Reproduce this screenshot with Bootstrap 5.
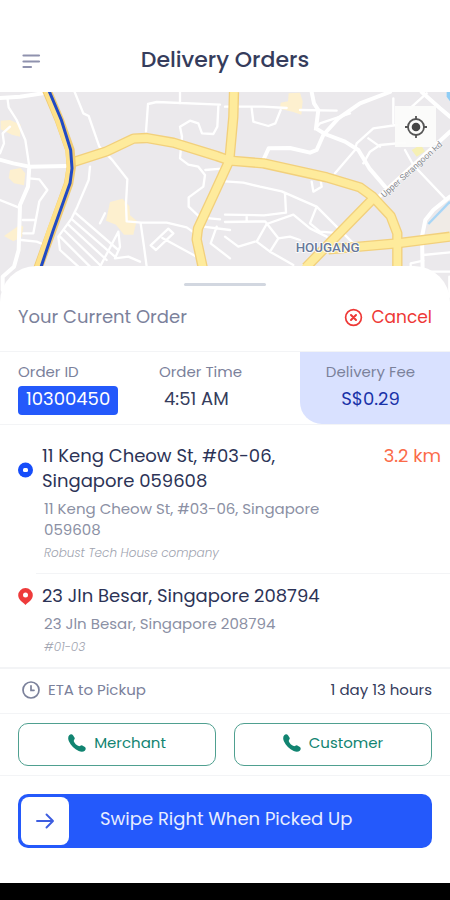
<!DOCTYPE html>
<html lang="en">
<head>
<meta charset="utf-8">
<meta name="viewport" content="width=device-width, initial-scale=1">
<title>Delivery Orders</title>
<link rel="stylesheet" href="https://cdn.jsdelivr.net/npm/bootstrap@5.3.0/dist/css/bootstrap.min.css">
<style>
  :root { --ink: #353c5c; --muted: #7b819b; --blue: #2459fb; --green: #118471; --line: #f3f4f6; }
  body { font-family: Poppins, Inter, "Open Sans", sans-serif; color: var(--ink); background: #000; }
  .screen { background: #fff; padding-bottom: 35px; }
  .topbar { padding: 41px 18px 13px; }
  .topbar h1 { font-size: 22px; line-height: 38px; font-weight: 500; }
  .icon-btn { background: none; border: 0; padding: 0; display: flex; }
  .side-slot { width: 26px; }
  .map-area { height: 213px; }
  .locate { top: 14px; right: 14px; width: 41px; height: 41px; background: rgba(252,252,251,.92); }
  .sheet { margin-top: -39px; background: #fff; border-radius: 36px 36px 0 0; }
  .handle-row { padding-top: 17px; }
  .handle { width: 82px; height: 3px; background: #d2d7e0; }
  .line-b { border-bottom: 1px solid var(--line); }
  .line-thick { border-bottom: 2px solid var(--line); }
  .order-head { padding: 18px 18px 21px; font-size: 17px; line-height: 26px; }
  .order-head h2 { font-size: 18px; line-height: 26px; font-weight: 400; }
  .soft { color: var(--muted); }
  .cancel { color: #ee3836; }
  .info dt { font-size: 15px; font-weight: 400; line-height: 21px; color: var(--muted); }
  .info dd { font-size: 18px; line-height: 26px; }
  .info-cell { padding: 9px 18px 9px 9px; }
  .info-cell:first-child { padding-left: 18px; padding-right: 9px; }
  .order-no { background: var(--blue); color: #fff; border-radius: 4px; padding: 0 8px 3px; line-height: 26px; }
  .time { padding-left: 5px; }
  .fee { background: #d9e1ff; border-bottom-left-radius: 22px; }
  .fee dd { color: #1932a8; }
  .stop-row { padding: 18px 9px 10px 18px; }
  .stop-row.drop { padding-top: 0; padding-bottom: 10px; }
  .pin { width: 15px; flex: none; margin-right: 9px; }
  .stop-title { font-size: 18px; line-height: 25px; font-weight: 400; color: #2c3356; }
  .stop-title.wraps { max-width: 260px; }
  .stop-sub { font-size: 15px; line-height: 21px; color: #8b90a4; padding: 5px 0 0 2px; max-width: 300px; }
  .stop-note { font-size: 12px; line-height: 20px; font-style: italic; font-weight: 300; color: #a0a4b0; padding: 3px 0 0 2px; }
  .km { color: #fb6b49; font-size: 18px; line-height: 25px; }
  .divider { height: 1px; background: var(--line); margin: 0 0 9px 36px; }
  .eta { padding: 9px 18px 11px 22px; font-size: 15px; line-height: 24px; }
  .calls { padding: 9px 18px; }
  .calls .row { --bs-gutter-x: 18px; }
  .call-btn { border: 1px solid #4fa090; border-radius: 10px; color: var(--green); background: #fff; font-size: 15px; line-height: 24px; padding: 7px 8px 10px; }
  .call-btn:hover { background: #effaf7; color: var(--green); }
  .swipe-wrap { padding: 18px 18px 0; }
  .swipe { background: var(--blue); border: 0; border-radius: 10px; padding: 3px; color: #e8edff; font-size: 18px; }
  .knob { width: 48px; height: 48px; background: #fff; border-radius: 8px; flex: none; }
  .swipe-text { margin-left: 31px; line-height: 24px; padding-bottom: 4px; }
</style>
</head>
<body>
<main class="screen">
  <header class="topbar d-flex align-items-center justify-content-between">
    <button class="icon-btn side-slot" type="button" aria-label="Menu">
      <svg width="26" height="20" viewBox="0 0 26 20" fill="none" stroke="#8f92ae" stroke-width="2.200" stroke-linecap="round"><path d="M5.500 5.500H21M5.500 11.500H21M5.500 17H13"/></svg>
    </button>
    <h1 class="m-0">Delivery Orders</h1>
    <span class="side-slot"></span>
  </header>

  <section class="map-area position-relative overflow-hidden" aria-label="Map">
    <svg class="d-block w-100 h-100" viewBox="0 6 1350 639" preserveAspectRatio="xMidYMid slice">
      <rect y="6" width="1350" height="639" fill="#ebe9ec"/>
      <g fill="#fdf0cf">
        <path d="M2 92L30 90 62 104 60 140 36 134 2 118ZM30 240L62 234 76 250 72 286 42 280 26 264ZM12 438L60 404 70 410 66 440 40 454ZM330 336L368 326 388 348 390 376 410 392 400 434 372 434 348 404 318 392Z"/>
        <path d="M866 10L900 8 908 34 904 74 880 66 840 56 842 38 864 34Z"/>
        <path d="M1235 180L1262 164 1275 184 1250 200Z" fill="#f6f0b4"/>
        <path d="M1290 400L1350 345V425L1275 435Z" fill="#f0ebe6"/>
      </g>
      <path d="M1340 6H1350V34L1340 20Z" fill="#8fcdf5"/>
      <path d="M1285 402L1350 335" stroke="#a9d6f5" stroke-width="7" fill="none"/>
      <g fill="none" stroke="#fff" stroke-linejoin="round" stroke-linecap="round">
        <g stroke-width="12">
          <path d="M-5 24L60 20 128 10M-5 208L40 220 88 230 200 228M88 230L84 290 60 345 56 480 42 530 8 560V600"/>
          <path d="M790 210L806 175 870 174 930 188 950 180 970 135 1015 85 1080 40 1170 6M935 6L942 40 955 60 948 115 975 132 1035 155 1075 180 1108 235 1155 290"/>
          <path d="M1135 322L1350 125M1350 320L1300 360 1276 390 1266 440 1268 545M1265 6L1320 55 1350 80"/>
        </g>
        <g stroke-width="7">
          <path d="M22 22L26 52 50 90 76 150 88 230M0 190L12 160 8 130 30 110M0 330L55 352M88 265L118 268 142 300 118 334 100 430H70M68 390H105M64 450L110 455 135 465"/>
          <path d="M224 6L250 70 266 78 298 170 335 208 382 268 378 340 380 394 424 398 500 398 560 412 585 430M270 230L266 270 232 350 215 385 175 440 180 480 235 530"/>
          <path d="M438 125L444 42 470 36 660 44M540 6V40M655 50L652 110 640 132 606 130 595 100 570 92 540 110 546 140 540 205 565 224 595 230 615 255 610 290 566 322 566 350 600 382 660 388M616 240L665 236"/>
          <path d="M422 400L432 470 440 530M452 466L505 416 520 430 468 480ZM487 444L590 500M355 425L300 530M355 425L360 470 345 505 385 500 420 515M650 410L632 460 690 505M610 410L690 420"/>
          <path d="M228 370L355 480M216 388L345 500M205 404L320 510M192 420L300 525M180 440L270 530M300 400L315 370"/>
          <path d="M675 50H790L860 54M755 55L760 95 805 108 826 100 842 60M900 60L1010 62M945 118L960 100 1050 70"/>
          <path d="M675 274L730 278 780 290 845 304 900 328 950 350 930 400 960 425 1025 430M855 310L858 368 792 376 675 374M740 376V394M675 396L795 394 835 445 810 485 770 455 800 402 880 374 930 415 980 440M675 440L715 470 765 455M835 445L870 440 900 450M810 485L880 525M935 275L940 305 965 290 962 272M950 350L1060 460"/>
          <path d="M1005 250L1065 180 1070 160 1120 115 1190 105M1090 220L1110 185 1140 165 1215 158M1105 145L1140 170M1215 180L1240 225 1335 325M1180 25V100M1280 10L1230 55M1270 495L1350 487M1232 530V520L1270 512M1270 545L1350 545M1348 560V620"/>
        </g>
      </g>
      <g fill="none" stroke-linejoin="round">
        <g stroke="#f2d07c" stroke-width="31">
          <path d="M215 218L320 184 400 146 440 144 520 158 650 198 690 212 790 220 980 262 1080 292 1118 320 1172 378 1192 430 1192 530"/>
          <path d="M702 6L700 80 688 212 640 316 594 415 590 448 608 532M918 532L1120 325M985 478L1190 460 1350 440"/>
        </g>
        <g stroke="#feeb9c" stroke-width="23">
          <path d="M215 218L320 184 400 146 440 144 520 158 650 198 690 212 790 220 980 262 1080 292 1118 320 1172 378 1192 430 1192 540"/>
          <path d="M702 0L700 80 688 212 640 316 594 415 590 448 610 540M910 540L1120 325M985 478L1190 460 1360 439"/>
        </g>
        <path d="M140 0L178 90 210 180 214 230 206 280 152 430 112 540" stroke="#f0cb74" stroke-width="28"/>
        <path d="M138 0L174 90 205 180 209 230 202 280 150 420 110 540" stroke="#fee18a" stroke-width="18"/>
        <path d="M146 0L184 90 212 180 216 235 210 280 160 420 120 540" stroke="#214ac4" stroke-width="9"/>
      </g>
      <g font-family="Roboto, sans-serif">
        <text x="887" y="486" font-size="40" font-weight="500" fill="#67789a" stroke="#fff" stroke-width="5" paint-order="stroke">HOUGANG</text>
        <text transform="translate(1153 324) rotate(-42)" font-size="26" fill="#85888e" stroke="#fff" stroke-width="3" paint-order="stroke">Upper Serangoon Rd</text>
      </g>
    </svg>
    <button class="icon-btn locate position-absolute align-items-center justify-content-center" type="button" aria-label="My location">
      <svg width="24" height="24" viewBox="0 0 24 24"><circle cx="12" cy="12" r="8" fill="none" stroke="#555" stroke-width="1.800"/><circle cx="12" cy="12" r="4.300" fill="#444"/><path d="M12 1v4M12 19v4M1 12h4M19 12h4" stroke="#555" stroke-width="1.800"/></svg>
    </button>
  </section>

  <section class="sheet position-relative">
    <div class="handle-row"><div class="handle mx-auto rounded-pill"></div></div>
    <div class="order-head line-b d-flex justify-content-between align-items-center">
      <h2 class="soft m-0">Your Current Order</h2>
      <button class="icon-btn cancel align-items-center gap-2" type="button">
        <svg width="19" height="19" viewBox="0 0 19 19" fill="none" stroke="currentColor" stroke-width="1.700" stroke-linecap="round"><circle cx="9.500" cy="9.500" r="7.900"/><path d="M7 7l5 5M12 7l-5 5" stroke-width="2"/></svg>
        Cancel
      </button>
    </div>

    <dl class="info row g-0 m-0 line-b">
      <div class="col-4 info-cell"><dt>Order ID</dt><dd class="m-0 mt-1"><span class="order-no d-inline-block align-top">10300450</span></dd></div>
      <div class="col-4 info-cell"><dt>Order Time</dt><dd class="m-0 mt-1 time">4:51 AM</dd></div>
      <div class="col-4 info-cell fee text-center"><dt>Delivery Fee</dt><dd class="m-0 mt-1">S$0.29</dd></div>
    </dl>

    <div class="line-thick">
      <div class="stop-row d-flex">
        <svg class="pin mt-3" width="15" height="30" viewBox="0 0 15 30"><circle cx="7.500" cy="11" r="7.500" fill="#164dfa"/><rect x="5" y="9" width="5" height="4" rx="1.500" fill="#fff"/></svg>
        <div class="flex-grow-1">
          <h3 class="stop-title wraps m-0">11 Keng Cheow St, #03-06, Singapore 059608</h3>
          <p class="stop-sub m-0">11 Keng Cheow St, #03-06, Singapore 059608</p>
          <p class="stop-note m-0">Robust Tech House company</p>
        </div>
        <span class="km text-nowrap">3.2 km</span>
      </div>
      <div class="divider"></div>
      <div class="stop-row drop d-flex">
        <svg class="pin mt-1" width="15" height="19" viewBox="0 0 15 19"><path d="M7.500 1A7.300 7.300 0 0 0 .2 8.300C.2 12.700 4.500 15 7.500 18c3-3 7.300-5.300 7.300-9.700A7.300 7.300 0 0 0 7.500 1Z" fill="#ee3b3b"/><circle cx="7.500" cy="8" r="2.500" fill="#fff"/></svg>
        <div>
          <h3 class="stop-title m-0">23 Jln Besar, Singapore 208794</h3>
          <p class="stop-sub m-0">23 Jln Besar, Singapore 208794</p>
          <p class="stop-note m-0">#01-03</p>
        </div>
      </div>
    </div>

    <div class="eta line-b d-flex align-items-center justify-content-between">
      <span class="soft d-flex align-items-center gap-2">
        <svg width="18" height="18" viewBox="0 0 18 18" fill="none" stroke="currentColor" stroke-width="1.700" stroke-linecap="round"><circle cx="9" cy="9" r="8"/><path d="M9 4.800V9.300H12"/></svg>
        ETA to Pickup
      </span>
      <span>1 day 13 hours</span>
    </div>

    <div class="calls line-b">
      <div class="row">
        <div class="col"><button type="button" class="call-btn btn w-100 d-flex justify-content-center align-items-center gap-2">
          <svg width="18" height="18" viewBox="0 0 18 18" fill="currentColor"><path d="M1.200 1.300C2.300.1 4 0 5 1.200L6.600 3.700C7.300 5 5.500 6 5.800 7.200 6.600 9.400 8.500 11.200 10.700 12.100 12 12.500 13 10.700 14.300 11.400L16.900 13C18.100 14 17.900 15.600 16.800 16.700 15.300 18.100 12.800 17.900 10.700 17 6.500 15.200 2.700 11.300.9 7.200 0 5.200-.2 2.800 1.200 1.300Z"/></svg>
          Merchant</button></div>
        <div class="col"><button type="button" class="call-btn btn w-100 d-flex justify-content-center align-items-center gap-2">
          <svg width="18" height="18" viewBox="0 0 18 18" fill="currentColor"><path d="M1.200 1.300C2.300.1 4 0 5 1.200L6.600 3.700C7.300 5 5.500 6 5.800 7.200 6.600 9.400 8.500 11.200 10.700 12.100 12 12.500 13 10.700 14.300 11.400L16.900 13C18.100 14 17.900 15.600 16.800 16.700 15.300 18.100 12.800 17.900 10.700 17 6.500 15.200 2.700 11.300.9 7.200 0 5.200-.2 2.800 1.200 1.300Z"/></svg>
          Customer</button></div>
      </div>
    </div>

    <div class="swipe-wrap">
      <button type="button" class="swipe w-100 d-flex align-items-center">
        <span class="knob d-flex align-items-center justify-content-center">
          <svg width="20" height="18" viewBox="0 0 20 18" fill="none" stroke="#3d5de0" stroke-width="1.900" stroke-linecap="round" stroke-linejoin="round"><path d="M2 9H17.500M11.500 2.500L18 9 11.500 15.500"/></svg>
        </span>
        <span class="swipe-text">Swipe Right When Picked Up</span>
      </button>
    </div>
  </section>
</main>
<script src="https://cdn.jsdelivr.net/npm/bootstrap@5.3.0/dist/js/bootstrap.bundle.min.js"></script>
</body>
</html>
